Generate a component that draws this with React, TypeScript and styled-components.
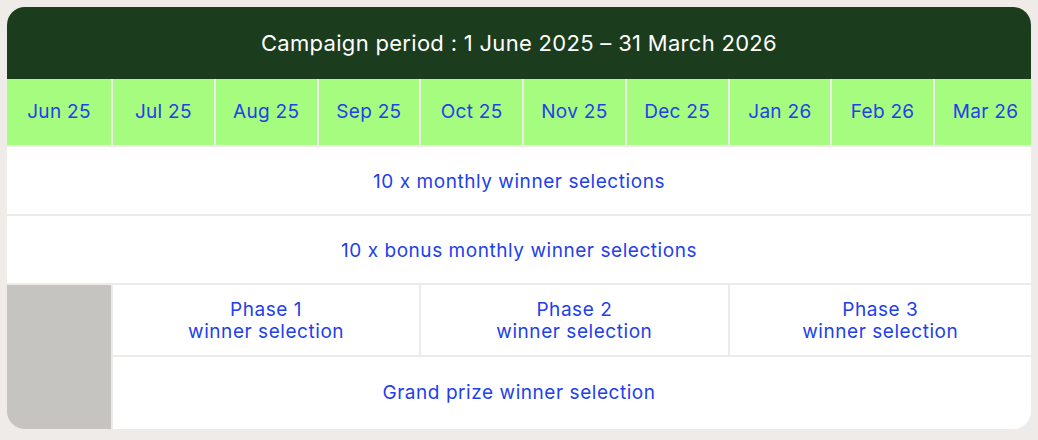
import React from "react";
import styled, { createGlobalStyle } from "styled-components";

const GlobalStyle = createGlobalStyle`
  html, body {
    margin: 0;
    padding: 0;
    background: #efebe9;
  }
  body {
    font-family: "Inter", "Open Sans", sans-serif;
  }
`;

const Page = styled.div`
  padding: 7px 7px 11px 7px;
  width: 1024px;
`;

const Card = styled.div`
  width: 1024px;
  border-radius: 18px;
  overflow: hidden;
  background: #eeeae8;
`;

const Header = styled.div`
  height: 72px;
  background: #1b3c1d;
  color: #ffffff;
  display: flex;
  align-items: center;
  justify-content: center;
  font-size: 22px;
  font-weight: 400;
  letter-spacing: 0.3px;
`;

const Grid = styled.div`
  display: grid;
  grid-template-columns: 104px repeat(8, 1fr) 96px;
  grid-template-rows: 66px 67px 67px 70px 72px;
  gap: 2px;
  background: #eeeae8;
`;

const Month = styled.div<{ $last?: boolean }>`
  background: #a6fc7e;
  color: #2240ea;
  display: flex;
  align-items: center;
  justify-content: center;
  font-size: 19px;
  letter-spacing: 0.3px;
  padding-bottom: 2px;
  padding-left: ${(p) => (p.$last ? 5 : 0)}px;
`;

const Cell = styled.div<{ $col: string; $row: string; $shift?: number; $top?: number }>`
  grid-column: ${(p) => p.$col};
  grid-row: ${(p) => p.$row};
  background: #ffffff;
  color: #2240ea;
  display: flex;
  align-items: center;
  justify-content: center;
  text-align: center;
  font-size: 19px;
  letter-spacing: 0.55px;
  line-height: 22px;
  padding-right: ${(p) => p.$shift ?? 0}px;
  padding-top: ${(p) => p.$top ?? 0}px;
`;

const Filler = styled.div`
  grid-column: 1;
  grid-row: 4 / 6;
  background: #c5c4c1;
`;

const months = [
  "Jun 25",
  "Jul 25",
  "Aug 25",
  "Sep 25",
  "Oct 25",
  "Nov 25",
  "Dec 25",
  "Jan 26",
  "Feb 26",
  "Mar 26",
];

export default function App() {
  return (
    <>
      <GlobalStyle />
      <Page>
        <Card>
          <Header>Campaign period : 1 June 2025 – 31 March 2026</Header>
          <Grid>
            {months.map((m, i) => (
              <Month key={m} $last={i === months.length - 1}>
                {m}
              </Month>
            ))}
            <Cell $col="1 / 11" $row="2" $top={3}>
              10 x monthly winner selections
            </Cell>
            <Cell $col="1 / 11" $row="3" $top={3}>
              10 x bonus monthly winner selections
            </Cell>
            <Filler />
            <Cell $col="2 / 5" $row="4" $top={2}>
              Phase 1<br />winner selection
            </Cell>
            <Cell $col="5 / 8" $row="4" $top={2}>
              Phase 2<br />winner selection
            </Cell>
            <Cell $col="8 / 11" $row="4" $top={2}>
              Phase 3<br />winner selection
            </Cell>
            <Cell $col="2 / 11" $row="5" $shift={106}>
              Grand prize winner selection
            </Cell>
          </Grid>
        </Card>
      </Page>
    </>
  );
}
